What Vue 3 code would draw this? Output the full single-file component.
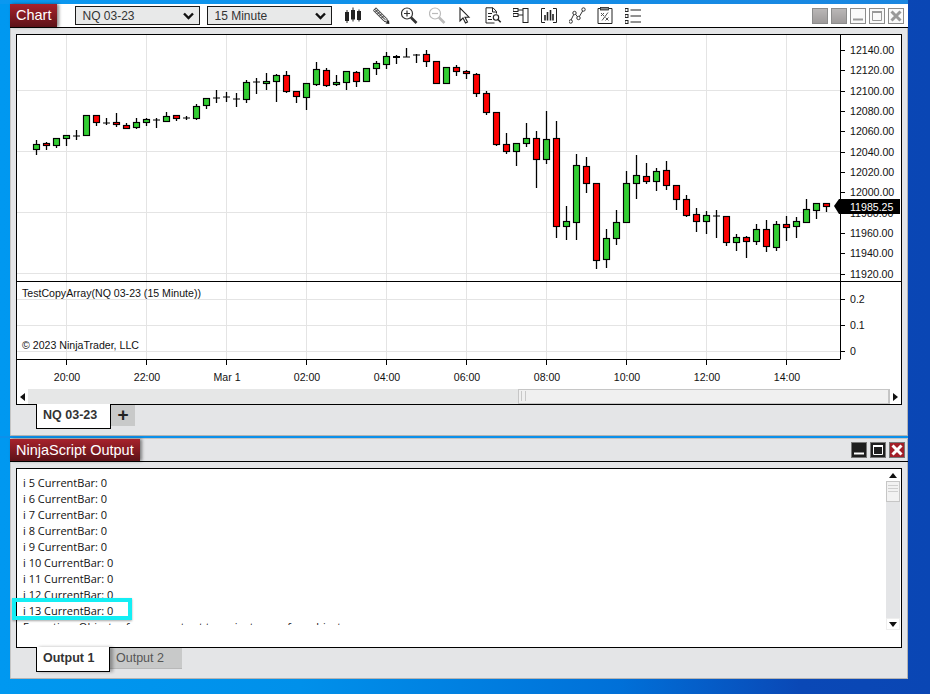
<script setup>
const candles = [
  [140,155,144.3,149.7,'g'],[141.7,150,143.3,145.7,'r'],[138.3,147.7,138.3,145.7,'g'],[135.3,146,135.3,138.7,'g'],
  [130,140,135.3,136.7,'k'],[115.3,135.7,115.3,135.7,'g'],[115.3,126,115.3,122.7,'r'],[118.3,125,121.7,122,'k'],
  [113.3,126.7,122.3,124.7,'r'],[123,129,125.3,128.7,'r'],[118.3,128.7,122.3,127.7,'g'],[118,126,119.3,122.7,'g'],
  [118.3,128,119.3,120.7,'k'],[112.3,120.7,115.7,120.7,'g'],[115.3,121,115.3,118.7,'r'],[116,120,117.3,118.7,'k'],
  [104.3,120,106.3,118.7,'g'],[98,109,98.3,105.3,'g'],[90,103,97,97,'k'],[92,102,96,97.3,'k'],
  [93.3,107,97.7,97.7,'k'],[80,102.7,82.3,99.3,'g'],[78.3,94,81.3,82.7,'k'],[73.3,90,81.3,83.7,'g'],
  [74.3,102,75.3,81.3,'g'],[71,92.7,75.3,91.3,'r'],[91.3,102.7,91.3,96.7,'r'],[83.3,109.7,83.3,97.7,'g'],
  [62,85.7,69.3,84.3,'g'],[68.3,86.7,70.3,85.7,'r'],[75,85.7,82.3,84.7,'g'],[71.3,90,71.3,82.7,'g'],
  [71,86.7,72.3,81.7,'r'],[68.3,81.7,68.3,81.7,'g'],[61,75,63.3,68.7,'g'],[52,69,56.3,64.7,'g'],
  [55,64,56,57.7,'k'],[48,57.3,56.3,56.7,'k'],[54,63,54.3,55.7,'k'],[50,67,54.3,61.7,'r'],
  [61.3,83.7,61.3,83.7,'r'],[67.3,83.7,67.3,83.7,'g'],[65,76,67.3,71.7,'r'],[70,79,71.3,73.7,'r'],
  [73,97,74.3,93.7,'r'],[91,115,93.3,112.7,'r'],[112.3,146,112.3,144.7,'r'],[133.3,154,144.3,151.7,'r'],
  [143.3,166,143.3,151.7,'g'],[123.3,147,138.3,143.7,'g'],[131,188,138.3,159.3,'r'],[111,164,139.3,159.3,'g'],
  [121,237.7,138.3,226.3,'r'],[206,240,221.3,226.3,'g'],[154,240,165.3,222.3,'g'],[157,193,166.3,183.3,'r'],
  [183.3,269,183.3,260.3,'r'],[229,268,238.3,259.3,'g'],[210.3,245,222.3,238.3,'g'],[171,222.3,183.3,222.3,'g'],
  [155,199,175.3,183.3,'g'],[163,184,176.3,181.3,'r'],[168,191,171.3,181.3,'g'],[161,190,170.3,185.3,'r'],
  [185.3,210,185.3,199.3,'r'],[195,217.3,199.3,215.3,'r'],[208,232,214.3,221.3,'r'],[211,234,215.3,221.3,'g'],
  [210,238,215.3,216.7,'k'],[216.3,246,216.3,242.3,'r'],[234,251,237.3,242.3,'g'],[236,258,237.3,241.7,'r'],
  [224,245,229.3,241.3,'g'],[220,252,229.3,246.3,'r'],[221.3,251,224.3,247.3,'g'],[216,241,224.3,227.3,'r'],
  [217.3,238,221.3,226.3,'g'],[199,222.3,209.3,222.3,'g'],[203.3,219,203.3,210.3,'g'],[203.3,211.7,203.3,206.3,'r']
].map((c, i) => {
  const x = 36.5 + i * 10
  const top = Math.round(c[2]) + 0.5
  const h = Math.max(Math.round(c[3] - c[2]), 1)
  return { x, wt: Math.round(c[0]), wb: Math.round(c[1]), top, h, kind: c[4] }
})
const gridX = [66.5, 146.5, 226.5, 306.5, 386.5, 466.5, 546.5, 626.5, 706.5, 786.5]
const gridY = [90.5, 151.5, 212.5, 273.5]
const prices = Array.from({ length: 12 }, (_, i) => ({
  label: (12140 - i * 20).toFixed(2),
  y: Math.round(50 + i * 20.33)
}))
const lowerAxis = [{ label: '0.2', y: 299 }, { label: '0.1', y: 325 }, { label: '0', y: 351 }]
const times = ['20:00', '22:00', 'Mar 1', '02:00', '04:00', '06:00', '08:00', '10:00', '12:00', '14:00']
const lines = [5, 6, 7, 8, 9, 10, 11, 12, 13].map(i => `i ${i} CurrentBar: 0`)
</script>

<template>
  <div class="desk">
    <div class="strip"></div>

    <section class="win first">
      <header class="bar white">
        <div class="title">Chart</div>
        <div class="drop first-drop"><span>NQ 03-23</span><svg width="11" height="8" viewBox="0 0 11 8"><path d="M1 1.500l4.500 4.500L10 1.500" fill="none" stroke="#111" stroke-width="2.400"/></svg></div>
        <div class="drop"><span>15 Minute</span><svg width="11" height="8" viewBox="0 0 11 8"><path d="M1 1.500l4.500 4.500L10 1.500" fill="none" stroke="#111" stroke-width="2.400"/></svg></div>
        <div class="tools">
          <svg class="ic" viewBox="0 0 17 17"><g stroke="#222" fill="#222"><path d="M2.500 3v13M8.500 .5v14M14.500 2.500v12" fill="none" stroke-width="1"/><rect x="1" y="5.500" width="3" height="8"/><rect x="7" y="3.500" width="3" height="8.500"/><rect x="13" y="4.500" width="3" height="8"/></g></svg>
          <svg class="ic" viewBox="0 0 17 17"><path d="M3.500 .8L.8 3.500l10.800 10.800 3.800 1.100-1.100-3.800z" fill="#ddd" stroke="#333" stroke-width="1"/><path d="M2.200 2.200l10.500 10.500M3 5l2-2M5 7l2-2M7 9l2-2M9 11l2-2" stroke="#333" stroke-width="1" fill="none"/><path d="M13 16.500l3.500-3.500.4 3.900z" fill="#222"/></svg>
          <svg class="ic" viewBox="0 0 17 17"><circle cx="6.500" cy="6.500" r="5.500" fill="none" stroke="#333" stroke-width="1.200"/><path d="M3.500 6.500h6M6.500 3.500v6" stroke="#333" stroke-width="1.200"/><path d="M10.500 10.500l5.500 5.500" stroke="#333" stroke-width="2.600"/></svg>
          <svg class="ic" viewBox="0 0 17 17"><circle cx="6.500" cy="6.500" r="5.500" fill="none" stroke="#bbb" stroke-width="1.200"/><path d="M3.500 6.500h6" stroke="#bbb" stroke-width="1.200"/><path d="M10.500 10.500l5.500 5.500" stroke="#bbb" stroke-width="2.600"/></svg>
          <svg class="ic" viewBox="0 0 17 17"><path d="M3.500 1v13l3-3 2.500 5 2-1-2.500-4.800h4z" fill="#fff" stroke="#222" stroke-width="1.100"/></svg>
          <svg class="ic" viewBox="0 0 17 17"><path d="M10 16H1.500V.8h7L12 4.500v2" fill="none" stroke="#222" stroke-width="1"/><path d="M8 1v4h4M3.500 6.500h4M3.500 9.500h3M3.500 12.500h4" fill="none" stroke="#222" stroke-width="1"/><circle cx="11.500" cy="10.500" r="2.700" fill="none" stroke="#222" stroke-width="1.100"/><path d="M13.500 12.500l2.700 2.700" stroke="#222" stroke-width="1.600"/></svg>
          <svg class="ic" viewBox="0 0 17 17"><rect x="10.500" y="1.500" width="5" height="14" fill="#fff" stroke="#222"/><rect x=".5" y="1.500" width="5" height="3" fill="#fff" stroke="#222"/><rect x=".5" y="6.500" width="5" height="3" fill="#fff" stroke="#222"/><path d="M5.500 3h5M5.500 8h5" stroke="#222"/></svg>
          <svg class="ic" viewBox="0 0 17 17"><path d="M4.500 1.500H1v14h3.500M12.500 1.500H16v14h-3.500" fill="none" stroke="#222" stroke-width="1"/><path d="M4.500 8v5.500M7 5v8.500M10 3v10.500M12.500 7v6.500" stroke="#222" stroke-width="1.600"/></svg>
          <svg class="ic" viewBox="0 0 17 17"><path d="M2 14L6 6l4 5 5-8.500" fill="none" stroke="#333" stroke-width="1"/><g fill="#fff" stroke="#333" stroke-width="1"><circle cx="2.200" cy="14.500" r="1.700"/><circle cx="6" cy="6" r="1.700"/><circle cx="10" cy="11" r="1.700"/><circle cx="15" cy="2.500" r="1.700"/></g></svg>
          <svg class="ic" viewBox="0 0 17 17"><path d="M4 1.500H1.500v15h14v-15h-3" fill="none" stroke="#222"/><rect x="4" y=".5" width="8" height="2.500" fill="#888" stroke="#222" stroke-width=".8"/><path d="M4.500 6l3 3M7.500 6l-3 3M9 10.500l3 3M12 10.500l-3 3M11.500 5.500l-6 8" fill="none" stroke="#555" stroke-width="1"/></svg>
          <svg class="ic" viewBox="0 0 17 17"><g fill="none" stroke="#222"><rect x=".5" y="1.500" width="3" height="3"/><rect x=".5" y="7.500" width="3" height="3"/><rect x=".5" y="13.500" width="3" height="3"/><path d="M6 3h10.500M6 9h10.500M6 15h10.500"/></g></svg>
        </div>
        <div class="winbtns">
          <div class="wb greyed"></div>
          <div class="wb greyed"></div>
          <div class="wb light"><svg viewBox="0 0 14 14"><path d="M2 10.500h10" stroke="#999" stroke-width="2"/></svg></div>
          <div class="wb light"><svg viewBox="0 0 14 14"><path d="M2.500 2.500h9v9h-9z" fill="none" stroke="#999"/><path d="M2 3h10" stroke="#999" stroke-width="2"/></svg></div>
          <div class="wb light"><svg viewBox="0 0 14 14"><path d="M2.500 2.500l9 9M11.500 2.500l-9 9" stroke="#999" stroke-width="3"/></svg></div>
        </div>
      </header>

      <div class="content">
        <div class="box chart">
          <svg class="plot" width="884" height="354" viewBox="17 35 884 354">
            <g class="grid">
              <line v-for="x in gridX" :key="x" :x1="x" :x2="x" y1="35" y2="359" />
              <line v-for="y in gridY" :key="y" x1="17" x2="840" :y1="y" :y2="y" />
              <line v-for="t in lowerAxis" :key="t.label" x1="17" x2="840" :y1="t.y + 0.5" :y2="t.y + 0.5" />
            </g>
            <g v-for="c in candles" :key="c.x">
              <line class="wick" :x1="c.x" :x2="c.x" :y1="c.wt" :y2="c.wb" />
              <line v-if="c.kind === 'k'" class="doji" :x1="c.x - 3.5" :x2="c.x + 3.5" :y1="c.top + 0.5" :y2="c.top + 0.5" :stroke-width="c.h > 1 ? 2 : 1" />
              <rect v-else :class="c.kind === 'g' ? 'up' : 'down'" :x="c.x - 3" :y="c.top" width="6" :height="c.h" />
            </g>
            <line class="axis" x1="17" x2="901" y1="281.500" y2="281.500" />
            <line class="axis" x1="840.500" x2="840.500" y1="35" y2="359" />
            <line class="axis" x1="17" x2="840.500" y1="359.500" y2="359.500" />
            <g v-for="p in prices" :key="p.label">
              <line class="axis" x1="840" x2="845" :y1="p.y + 0.5" :y2="p.y + 0.5" />
              <text class="lbl" x="850" :y="p.y + 4">{{ p.label }}</text>
            </g>
            <g v-for="t in lowerAxis" :key="t.label">
              <line class="axis" x1="840" x2="845" :y1="t.y + 0.5" :y2="t.y + 0.5" />
              <text class="lbl" x="850" :y="t.y + 4">{{ t.label }}</text>
            </g>
            <g v-for="(t, i) in times" :key="t">
              <line class="axis" :x1="gridX[i]" :x2="gridX[i]" y1="359" y2="365" />
              <text class="lbl mid" :x="gridX[i] + 0.5" y="381">{{ t }}</text>
            </g>
            <polygon class="tag" points="834,206 839,199 900,199 900,214 839,214" />
            <text class="lbl tagtxt" x="850" y="211">11985.25</text>
            <text class="lbl" x="22" y="297">TestCopyArray(NQ 03-23 (15 Minute))</text>
            <text class="lbl" x="22" y="349">© 2023 NinjaTrader, LLC</text>
          </svg>
          <div class="hscroll">
            <div class="sbtn"><svg width="6" height="8" viewBox="0 0 6 8"><path d="M5 0v8L0 4z" fill="#111"/></svg></div>
            <div class="htrack"></div>
            <div class="hthumb"><i></i></div>
            <div class="sbtn"><svg width="6" height="8" viewBox="0 0 6 8"><path d="M1 0v8l5-4z" fill="#111"/></svg></div>
          </div>
        </div>
        <div class="tabs">
          <div class="tab">NQ 03-23</div>
          <div class="plus">+</div>
        </div>
      </div>
    </section>

    <div class="midline"></div>

    <section class="win second">
      <header class="bar">
        <div class="title">NinjaScript Output</div>
        <div class="winbtns dark">
          <div class="wb black"><svg viewBox="0 0 14 14"><path d="M2 10.500h10" stroke="#fff" stroke-width="2"/></svg></div>
          <div class="wb black"><svg viewBox="0 0 14 14"><path d="M2.500 2.500h9v9h-9z" fill="none" stroke="#fff"/><path d="M2 3h10" stroke="#fff" stroke-width="2"/></svg></div>
          <div class="wb red"><svg viewBox="0 0 14 14"><path d="M2.500 2.500l9 9M11.500 2.500l-9 9" stroke="#fff" stroke-width="3"/></svg></div>
        </div>
      </header>
      <div class="content">
        <div class="box output">
          <div class="log">
            <div v-for="l in lines" :key="l" class="line">{{ l }}</div>
            <div class="line">Exception: Object reference not set to an instance of an object.</div>
          </div>
          <div class="vscroll">
            <div class="vbtn"><svg width="8" height="5" viewBox="0 0 8 5"><path d="M0 5h8L4 0z" fill="#111"/></svg></div>
            <div class="vthumb"><i></i><i></i><i></i></div>
            <div class="vtrack"></div>
            <div class="vbtn"><svg width="8" height="5" viewBox="0 0 8 5"><path d="M0 0h8L4 5z" fill="#111"/></svg></div>
          </div>
          <div class="mark"></div>
        </div>
        <div class="tabs">
          <div class="tab out">Output 1</div>
          <div class="other">Output 2</div>
        </div>
      </div>
    </section>
  </div>
</template>

<style scoped>
.desk {
  width: 930px;
  height: 694px;
  box-sizing: border-box;
  padding: 0 22px 0 10px;
  overflow: hidden;
  background: linear-gradient(90deg, #0098f0 0, #0090ea 300px, #0070d8 620px, #0a48b6 800px, #0a46b4 930px);
  font-family: "Liberation Sans", Arial, sans-serif;
}
.strip { height: 4px; margin-left: -10px; background: linear-gradient(90deg, #0a98f0, #1a86e0); }
.midline { height: 2px; margin-left: -10px; background: #0c90ea; }
.win {
  box-sizing: border-box;
  background: #e4e5e7;
  box-shadow: inset -1px -1px 0 #b4b4b4, inset 1px 0 0 #c4c4c4;
}
.first { height: 432px; }
.second { height: 241px; border-top: 1px solid #c4c4c4; }
.bar {
  display: flex;
  align-items: center;
  height: 24px;
  box-sizing: border-box;
  border-bottom: 1px solid #000;
}
.second .bar { height: 23px; }
.bar.white { background: #fff; }
.title {
  align-self: stretch;
  padding: 0 6px;
  color: #fff;
  font-size: 14.500px;
  line-height: 23px;
  background: linear-gradient(180deg, #a8222c, #5c1218);
  box-shadow: 2px 0 3px rgba(0, 0, 0, .45);
}
.second .title { line-height: 22px; }
.drop {
  display: flex;
  align-items: center;
  justify-content: space-between;
  box-sizing: border-box;
  width: 125px;
  height: 19px;
  margin-left: 7px;
  padding: 0 5px 0 6px;
  border: 1px solid #1a1a1a;
  background: #e8e9e9;
  color: #333;
  font-size: 12px;
}
.first-drop { margin-left: 18px; }
.tools { display: flex; margin-left: 7px; }
.ic { width: 17px; height: 17px; padding: 0 5.500px; flex: none; }
.winbtns { display: flex; gap: 3px; margin-left: auto; margin-right: 4px; }
.winbtns.dark { margin-right: 3px; }
.wb { box-sizing: border-box; width: 16px; height: 16px; border: 1px solid #8c8c8c; }
.wb svg { display: block; width: 14px; height: 14px; }
.greyed { background: linear-gradient(180deg, #bab7b7, #9e9b9b); }
.light { background: #fafafa; }
.black { background: #1e1e1e; border-color: #777; }
.red { background: #a31f28; border-color: #777; }
.content { padding: 6px 6px 0; }
.box { position: relative; box-sizing: border-box; border: 1px solid #000; background: #fff; }
.chart { height: 371px; }
.plot { display: block; }
.grid line { stroke: #e4e4e4; stroke-width: 1; }
.wick { stroke: #000; stroke-width: 1.300; }
.doji { stroke: #000; }
.up { fill: #32cd32; stroke: #000; stroke-width: 1.150; }
.down { fill: #ff0000; stroke: #000; stroke-width: 1.150; }
.axis { stroke: #000; stroke-width: 1; }
.lbl { font-family: "Liberation Sans", Arial, sans-serif; font-size: 10.600px; fill: #111; }
.mid { text-anchor: middle; }
.tag { fill: #000; }
.tagtxt { fill: #fff; }
.hscroll { display: flex; height: 15px; background: #e4e5e7; }
.sbtn { display: flex; align-items: center; justify-content: center; width: 11px; background: #fff; }
.hscroll .sbtn:last-child { width: 12px; box-shadow: inset 1px 0 0 #c4c4c4; }
.htrack { width: 490px; background: #e6e7e7; }
.hthumb { flex: 1; box-sizing: border-box; position: relative; background: #f0f0f0; border: 1px solid #c6c6c6; }
.hthumb i { position: absolute; left: 2px; top: 1px; width: 3px; height: 10px; border-left: 1px solid #c8c8c8; border-right: 1px solid #c8c8c8; }
.tabs { display: flex; margin-left: 20px; align-items: flex-start; }
.tab {
  position: relative;
  box-sizing: border-box;
  width: 75px;
  height: 25px;
  margin-top: -1px;
  padding-left: 6px;
  border: 1px solid #000;
  border-top: 0;
  background: #fff;
  color: #333;
  font-weight: 700;
  font-size: 12.500px;
  line-height: 23px;
}
.plus {
  width: 24px;
  height: 21px;
  background: #c8c9c9;
  color: #222;
  font-size: 19px;
  font-weight: 700;
  line-height: 20px;
  text-align: center;
}
.output { display: flex; height: 180px; }
.log {
  flex: 1;
  height: 156px;
  overflow: hidden;
  box-sizing: border-box;
  padding: 6px 0 0 6px;
  font-family: "Open Sans", "Noto Sans", sans-serif;
  font-size: 11px;
  line-height: 16px;
  color: #111;
}
.line { white-space: nowrap; }
.vscroll { display: flex; flex-direction: column; width: 14px; height: 161px; margin-right: 1px; background: #e4e5e7; }
.vbtn { display: flex; align-items: center; justify-content: center; height: 12px; flex: none; background: #fff; }
.vscroll .vbtn:last-child { box-shadow: inset 0 0 0 1px #eee; }
.vthumb { display: flex; flex-direction: column; gap: 2px; align-items: center; box-sizing: border-box; height: 21px; padding-top: 3px; background: #f2f2f2; border: 1px solid #c6c6c6; }
.vthumb i { display: block; width: 10px; height: 1px; background: #cfcfcf; }
.vtrack { flex: 1; }
.mark {
  position: absolute;
  left: -5px;
  top: 129px;
  box-sizing: border-box;
  width: 120px;
  height: 22px;
  border: 4px solid #14eef4;
  box-shadow: 0 1px 2px rgba(0, 0, 0, .35);
}
.tab.out { width: 74px; box-shadow: 3px 0 3px rgba(0, 0, 0, .3); }
.other {
  width: 72px;
  height: 21px;
  box-sizing: border-box;
  padding-left: 6px;
  background: #c8c9c9;
  box-shadow: inset 0 -1px 0 #b8b8b8;
  color: #555;
  font-size: 12.500px;
  line-height: 20px;
}
</style>
